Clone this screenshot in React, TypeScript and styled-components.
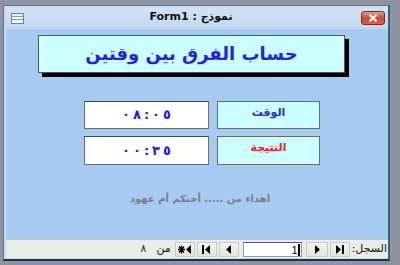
import React from "react";
import styled, { createGlobalStyle } from "styled-components";

const Global = createGlobalStyle`
  html, body {
    margin: 0;
    padding: 0;
    background: #8f93a2;
  }
  body {
    font-family: "DejaVu Sans", "Liberation Sans", sans-serif;
  }
`;

const Page = styled.div`
  width: 400px;
  height: 265px;
  box-sizing: border-box;
  padding: 5px 10px 4px 3px;
  background: #8f93a2;
  overflow: hidden;
`;

const Window = styled.div`
  height: 100%;
  display: flex;
  flex-direction: column;
  box-sizing: border-box;
  border: 1px solid #5d7190;
  border-right: 2px solid #2b6878;
  border-bottom: 2px solid #1d3242;
  background: #c6dbf1;
  padding: 0 0 1px 2px;
`;

const TitleBar = styled.div`
  height: 23px;
  flex: none;
  display: flex;
  align-items: center;
  position: relative;
  background: linear-gradient(#d3e3f4, #c2d7ee);
`;

const FormIcon = styled.div`
  width: 11px;
  height: 9px;
  margin-left: 5px;
  margin-top: 1px;
  border: 1px solid #6f7f98;
  background: linear-gradient(#e8eef6 0 2px, #8b9ab2 2px 3px, #f2f5fa 3px 5px, #8b9ab2 5px 6px, #f2f5fa 6px);
`;

const Title = styled.div`
  position: absolute;
  left: 0;
  right: 0;
  top: 4px;
  text-align: center;
  padding-right: 12px;
  font-size: 11px;
  font-weight: bold;
  color: #111;
`;

const CloseButton = styled.div`
  margin-left: auto;
  margin-right: 3px;
  margin-top: 1px;
  width: 22px;
  height: 12px;
  border: 1px solid #7b2a1e;
  border-radius: 3px;
  background: linear-gradient(#e69a85, #c8472f 55%, #d8674c);
  display: flex;
  align-items: center;
  justify-content: center;
`;

const Body = styled.div`
  flex: 1;
  background: #a6caf1;
  display: flex;
  flex-direction: column;
  align-items: flex-start;
  padding: 6px 0 0 32px;
`;

const HeadingBox = styled.div`
  width: 307px;
  height: 38px;
  background: #ccffff;
  border: 1px solid #555;
  box-shadow: 4px 4px 0 #000;
  display: flex;
  align-items: center;
  justify-content: center;
  direction: rtl;
  font-size: 18px;
  font-weight: bold;
  color: #2222e6;
  padding-bottom: 2px;
  box-sizing: border-box;
`;

const Fields = styled.div`
  margin-top: 28px;
  margin-left: 46px;
  display: grid;
  grid-template-columns: 125px 103px;
  grid-template-rows: 28px 29px;
  column-gap: 8px;
  row-gap: 7px;
`;

const ValueBox = styled.div`
  box-sizing: border-box;
  background: #fffffd;
  border: 1px solid #6b6b6b;
  border-top-color: #444;
  display: flex;
  align-items: center;
  justify-content: center;
  gap: 3px;
  font-size: 13px;
  font-weight: bold;
  color: #2020e0;
  direction: ltr;
  padding-bottom: 1px;
`;

const Glyph = styled.span`
  display: inline-block;
`;

const LabelBox = styled.div<{ $color: string }>`
  box-sizing: border-box;
  background: #ccffff;
  border: 1px solid #6b6b6b;
  display: flex;
  align-items: center;
  justify-content: center;
  padding-bottom: 6px;
  direction: rtl;
  font-size: 11px;
  font-weight: bold;
  color: ${(p) => p.$color};
`;

const Dedication = styled.div`
  align-self: stretch;
  margin-top: 28px;
  margin-left: -26px;
  text-align: center;
  direction: rtl;
  font-size: 10px;
  font-weight: bold;
  color: #7d7d7d;
  letter-spacing: 0.3px;
`;

const StatusBar = styled.div`
  height: 18px;
  flex: none;
  background: #ebebe7;
  direction: rtl;
  display: flex;
  align-items: center;
  padding-right: 1px;
  padding-top: 1px;
  box-sizing: border-box;
`;

const RecordLabel = styled.span`
  font-size: 11px;
  color: #111;
  margin-left: 2px;
  margin-top: -2px;
`;

const NavButton = styled.div<{ $w: number }>`
  width: ${(p) => p.$w}px;
  height: 15px;
  box-sizing: border-box;
  margin-left: 2px;
  background: linear-gradient(#f4f4f2, #e2e2de);
  border: 1px solid #c9c9c4;
  display: flex;
  align-items: center;
  justify-content: center;
`;

const RecordInput = styled.div`
  width: 59px;
  height: 15px;
  box-sizing: border-box;
  margin-left: 4px;
  margin-right: 2px;
  background: #fff;
  border: 1px solid #9a9a9a;
  border-top-color: #555;
  display: flex;
  align-items: center;
  padding-right: 4px;
  font-family: "Liberation Sans", sans-serif;
  font-size: 11px;
  color: #000;
`;

const Caret = styled.span`
  display: inline-block;
  width: 2px;
  height: 12px;
  background: #000;
  margin-right: -3px;
`;

const OfText = styled.span`
  font-size: 11px;
  color: #111;
  margin-right: 2px;
  margin-top: -2px;
`;

const CountText = styled.span`
  font-size: 11px;
  color: #333;
  margin-right: 10px;
  margin-top: -2px;
`;

const Tri = ({ dir }: { dir: "l" | "r" }) => (
  <svg width="6" height="9" viewBox="0 0 6 9">
    {dir === "r" ? <path d="M1 0 L6 4.5 L1 9 Z" fill="#000" /> : <path d="M5 0 L0 4.5 L5 9 Z" fill="#000" />}
  </svg>
);

const Bar = () => (
  <svg width="2" height="9" viewBox="0 0 2 9">
    <rect width="2" height="9" fill="#000" />
  </svg>
);

const Star = () => (
  <svg width="7" height="9" viewBox="0 0 7 9">
    <path d="M3.5 0.5 V8.5 M0 4.5 H7 M1 1.5 L6 7.5 M6 1.5 L1 7.5" stroke="#000" strokeWidth="1.3" />
  </svg>
);

const Row = styled.span`
  display: inline-flex;
  align-items: center;
  gap: 1px;
  direction: ltr;
`;

const TimeValue = ({ text }: { text: string }) => (
  <ValueBox>
    {Array.from(text).map((c, i) => (
      <Glyph key={i}>{c}</Glyph>
    ))}
  </ValueBox>
);

export default function App() {
  return (
    <Page>
      <Global />
      <Window>
        <TitleBar>
          <FormIcon />
          <Title>Form1 : نموذج</Title>
          <CloseButton>
            <svg width="10" height="8" viewBox="0 0 10 8">
              <path d="M1.5 0.8 L8.5 7.2 M8.5 0.8 L1.5 7.2" stroke="#fff" strokeWidth="2.2" />
            </svg>
          </CloseButton>
        </TitleBar>
        <Body>
          <HeadingBox>حساب الفرق بين وقتين</HeadingBox>
          <Fields>
            <TimeValue text="٠٨:٠٥" />
            <LabelBox $color="#2a2ae0">الوقت</LabelBox>
            <TimeValue text="٠٠:٣٥" />
            <LabelBox $color="#f02020">النتيجة</LabelBox>
          </Fields>
          <Dedication>اهداء من ..... أختكم أم عهود</Dedication>
        </Body>
        <StatusBar>
          <RecordLabel>السجل:</RecordLabel>
          <NavButton $w={20}>
            <Row>
              <Tri dir="r" />
              <Bar />
            </Row>
          </NavButton>
          <NavButton $w={22}>
            <Tri dir="r" />
          </NavButton>
          <RecordInput>
            <Caret />1
          </RecordInput>
          <NavButton $w={20}>
            <Tri dir="l" />
          </NavButton>
          <NavButton $w={20}>
            <Row>
              <Bar />
              <Tri dir="l" />
            </Row>
          </NavButton>
          <NavButton $w={20}>
            <Row>
              <Star />
              <Tri dir="l" />
            </Row>
          </NavButton>
          <OfText>من</OfText>
          <CountText>٨</CountText>
        </StatusBar>
      </Window>
    </Page>
  );
}
